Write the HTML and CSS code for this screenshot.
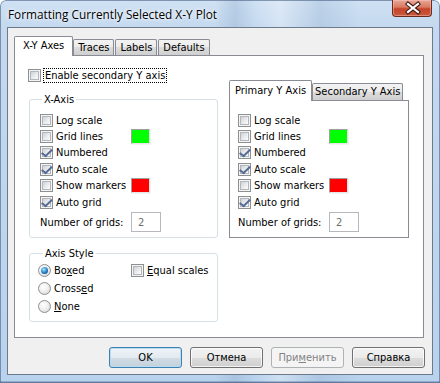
FILE: index.html
```html
<!DOCTYPE html>
<html lang="en">
<head>
    <meta charset="UTF-8">
    <title>Formatting Currently Selected X-Y Plot</title>
    <link rel="stylesheet" href="styles.css">
</head>
<body>
    <div class="window">
        <div class="titlebar">
            <span class="title">Formatting Currently Selected X-Y Plot</span>
            <div class="close">
                <svg width="40" height="16" viewBox="0 0 40 16">
                    <path d="M15 4 L25 12 M25 4 L15 12" stroke="#3d1a14" stroke-width="4.2" stroke-linecap="square"/>
                    <path d="M15 4 L25 12 M25 4 L15 12" stroke="#ffffff" stroke-width="2.2" stroke-linecap="square"/>
                </svg>
            </div>
        </div>

        <div class="client">
            <div class="tabs">
                <div class="tab active">X-Y Axes</div>
                <div class="tab">Traces</div>
                <div class="tab">Labels</div>
                <div class="tab">Defaults</div>
            </div>

            <div class="tab-panel">
                <label class="check enable">
                    <span class="box"></span>
                    <span class="focus">Enable secondary Y axis</span>
                </label>

                <fieldset class="group x-axis">
                    <legend>X-Axis</legend>
                    <div class="opts">
                        <label class="check"><span class="box"></span><span>Log scale</span></label>
                        <span></span>
                        <label class="check"><span class="box"></span><span>Grid lines</span></label>
                        <span class="swatch green"></span>
                        <label class="check"><span class="box on"></span><span>Numbered</span></label>
                        <span></span>
                        <label class="check"><span class="box on"></span><span>Auto scale</span></label>
                        <span></span>
                        <label class="check"><span class="box"></span><span>Show markers</span></label>
                        <span class="swatch red"></span>
                        <label class="check"><span class="box on"></span><span>Auto grid</span></label>
                        <span></span>
                    </div>
                    <div class="num-row">
                        <span>Number of grids:</span>
                        <input class="num" type="text" value="2" disabled>
                    </div>
                </fieldset>

                <div class="y-tabs">
                    <div class="tabs small">
                        <div class="tab active">Primary Y Axis</div>
                        <div class="tab">Secondary Y Axis</div>
                    </div>
                    <div class="y-panel">
                        <div class="opts">
                            <label class="check"><span class="box"></span><span>Log scale</span></label>
                            <span></span>
                            <label class="check"><span class="box"></span><span>Grid lines</span></label>
                            <span class="swatch green"></span>
                            <label class="check"><span class="box on"></span><span>Numbered</span></label>
                            <span></span>
                            <label class="check"><span class="box on"></span><span>Auto scale</span></label>
                            <span></span>
                            <label class="check"><span class="box"></span><span>Show markers</span></label>
                            <span class="swatch red"></span>
                            <label class="check"><span class="box on"></span><span>Auto grid</span></label>
                            <span></span>
                        </div>
                        <div class="num-row">
                            <span>Number of grids:</span>
                            <input class="num" type="text" value="2" disabled>
                        </div>
                    </div>
                </div>

                <fieldset class="group axis-style">
                    <legend>Axis Style</legend>
                    <div class="style-grid">
                        <label class="check"><span class="radio on"></span><span>Bo<u>x</u>ed</span></label>
                        <label class="check"><span class="box"></span><span><u>E</u>qual scales</span></label>
                        <label class="check"><span class="radio"></span><span>Cross<u>e</u>d</span></label>
                        <span></span>
                        <label class="check"><span class="radio"></span><span><u>N</u>one</span></label>
                        <span></span>
                    </div>
                </fieldset>
            </div>

            <div class="buttons">
                <div class="btn default">OK</div>
                <div class="btn">Отмена</div>
                <div class="btn disabled">При<u>м</u>енить</div>
                <div class="btn">Справка</div>
            </div>
        </div>
    </div>
</body>
</html>
```

FILE: styles.css
```css
* {
    box-sizing: border-box;
}

body {
    margin: 0;
    width: 440px;
    height: 383px;
    overflow: hidden;
    font-family: "DejaVu Sans Condensed", "DejaVu Sans", sans-serif;
    font-stretch: condensed;
    font-size: 11px;
    font-weight: normal;
    color: #000;
}

.window {
    width: 440px;
    height: 383px;
    display: flex;
    flex-direction: column;
    padding: 0 7px 8px 7px;
    border-radius: 6px 6px 0 0;
    background:
        linear-gradient(90deg, rgba(255,255,255,0) 0, rgba(255,255,255,0) 215px, rgba(120,150,190,.25) 235px, rgba(255,255,255,0) 255px, rgba(255,255,255,.3) 280px, rgba(120,150,190,.2) 320px, rgba(255,255,255,0) 360px),
        linear-gradient(#cfe1f3 0, #c4d9ef 27px, #b9d2ed 100%);
    box-shadow: inset 0 0 0 1px rgba(60,85,120,.55), inset 0 -2px 0 rgba(70,100,140,.35);
}

.titlebar {
    height: 27px;
    flex: none;
    display: flex;
    justify-content: space-between;
    align-items: flex-start;
    padding-left: 1px;
}

.title {
    font-family: "Open Sans", sans-serif;
    font-stretch: normal;
    font-size: 11.8px;
    line-height: 28px;
    text-shadow: 0 0 6px #fff, 0 0 3px #fff;
}

.close {
    width: 40px;
    height: 17px;
    margin: 0 1px 0 0;
    border: 1px solid #6b2a20;
    border-top: none;
    border-radius: 0 0 4px 4px;
    background: linear-gradient(#e6a899 0%, #d9785f 45%, #c4442a 55%, #c95a3c 100%);
    box-shadow: inset 0 0 0 1px rgba(255,200,190,.45);
}

.close svg {
    display: block;
}

.client {
    flex: 1;
    display: flex;
    flex-direction: column;
    padding: 8px 0 0 6px;
    background: #f0f0f0;
    border: 1px solid #6c7a8a;
}

/* tabs */

.tabs {
    display: flex;
    align-items: flex-end;
    height: 19px;
    position: relative;
    z-index: 1;
}

.tab {
    height: 16px;
    padding: 0 4px;
    margin-right: 1px;
    line-height: 15px;
    white-space: nowrap;
    border: 1px solid #898c95;
    border-bottom: none;
    border-radius: 2px 2px 0 0;
    background: linear-gradient(#f3f3f3 0%, #ebebeb 50%, #dddddd 50%, #cfcfcf 100%);
}

.tab.active {
    height: 20px;
    margin-bottom: -1px;
    padding: 0 8px;
    margin-right: 0;
    line-height: 18px;
    background: #fff;
}

.tab-panel {
    width: 410px;
    height: 283px;
    background: #fff;
    border: 1px solid #898c95;
    padding: 13px 0 0 14px;
    display: grid;
    grid-template-columns: 189px 180px;
    grid-template-rows: 13px auto auto;
    column-gap: 11px;
    align-content: start;
}

/* checkboxes and radios */

.check {
    display: flex;
    align-items: center;
    gap: 3px;
    white-space: nowrap;
}

.box,
.radio {
    flex: none;
    width: 13px;
    height: 13px;
    position: relative;
    border: 1px solid #8e8f8f;
    background: #f4f4f4;
}

.box::before {
    content: "";
    position: absolute;
    inset: 1px;
    border: 1px solid #b2b7bd;
    background: linear-gradient(135deg, #cdd1d6 0%, #eeeeef 60%, #fbfbfb 100%);
}

.box.on::after {
    content: "";
    position: absolute;
    left: 2px;
    top: 0;
    width: 4px;
    height: 8px;
    border: solid #566a96;
    border-width: 0 2px 2px 0;
    transform: translate(1px, 0) rotate(38deg) skewX(-8deg);
}

.radio {
    border-radius: 50%;
    background: radial-gradient(circle at 40% 35%, #ffffff 0%, #f0f0f0 45%, #cfcfcf 100%);
}

.radio.on::after {
    content: "";
    position: absolute;
    inset: 2px;
    border-radius: 50%;
    background: radial-gradient(circle at 40% 35%, #b6e6fb 0%, #3b9ad8 40%, #125a98 75%, #0d3a66 100%);
}

.enable {
    grid-column: 1;
    grid-row: 1;
    margin-left: -1px;
    height: 13px;
}

.focus {
    outline: 1px dotted #000;
    outline-offset: 0;
    padding: 0 1px;
    line-height: 13px;
}

/* group boxes */

.group {
    margin: 0;
    border: 1px solid #d5dfe5;
    border-radius: 3px;
    min-width: 0;
}

.group legend {
    padding: 0 2px;
    margin-left: 2px;
    line-height: 13px;
}

.x-axis {
    grid-column: 1;
    grid-row: 2;
    margin-top: 11px;
    padding: 6px 0 4px 10px;
}

.axis-style {
    grid-column: 1;
    grid-row: 3;
    margin-top: 9px;
    padding: 1px 0 6px 8px;
}

.axis-style legend {
    margin-left: 5px;
}

.opts {
    display: grid;
    grid-template-columns: 91px 1fr;
    grid-auto-rows: 16.4px;
    align-items: center;
}

.swatch {
    width: 19px;
    height: 15px;
    border: 1px solid;
    border-color: #a0a0a0 #e6e6e6 #e6e6e6 #a0a0a0;
    box-shadow: 1px 1px 0 #f3f3f3;
}

.swatch.green {
    background: #00ff00;
}

.swatch.red {
    background: #ff0000;
}

.num-row {
    display: grid;
    grid-template-columns: 91px 1fr;
    align-items: center;
    margin-top: 2px;
}

.num {
    width: 30px;
    height: 20px;
    margin: 0;
    padding: 0 0 0 6px;
    border: 1px solid #b5b8bd;
    background: #fff;
    font: inherit;
    color: #6d6d6d;
}

/* secondary tab control */

.y-tabs {
    grid-column: 2;
    grid-row: 1 / span 2;
    margin-top: 11px;
}

.tabs.small {
    height: 20px;
}

.tabs.small .tab {
    height: 17px;
    padding: 0 2px;
    line-height: 16px;
}

.tabs.small .tab.active {
    height: 21px;
    padding: 0 5px;
    line-height: 19px;
}

.y-panel {
    height: 138px;
    border: 1px solid #898c95;
    background: #fff;
    padding: 11px 0 5px 8px;
}

.style-grid {
    display: grid;
    grid-template-columns: 93px 1fr;
    grid-auto-rows: 18px;
    align-items: center;
}

/* buttons */

.buttons {
    display: flex;
    justify-content: flex-end;
    gap: 8px;
    padding-right: 7px;
    margin-top: 9px;
}

.btn {
    width: 73px;
    height: 21px;
    line-height: 19px;
    text-align: center;
    border: 1px solid #707070;
    border-radius: 3px;
    background: linear-gradient(#f2f2f2 0%, #ebebeb 50%, #dddddd 50%, #cfcfcf 100%);
    box-shadow: inset 0 0 0 1px rgba(255,255,255,.75);
}

.btn.default {
    border-color: #3c7fb1;
    background: linear-gradient(#eef3f7 0%, #e3ebf1 50%, #d2dde5 50%, #c3d1dc 100%);
    box-shadow: inset 0 0 0 1px #b9dcf2;
}

.btn.disabled {
    border-color: #adb2b5;
    background: #f4f4f4;
    color: #838383;
    box-shadow: none;
}
```
